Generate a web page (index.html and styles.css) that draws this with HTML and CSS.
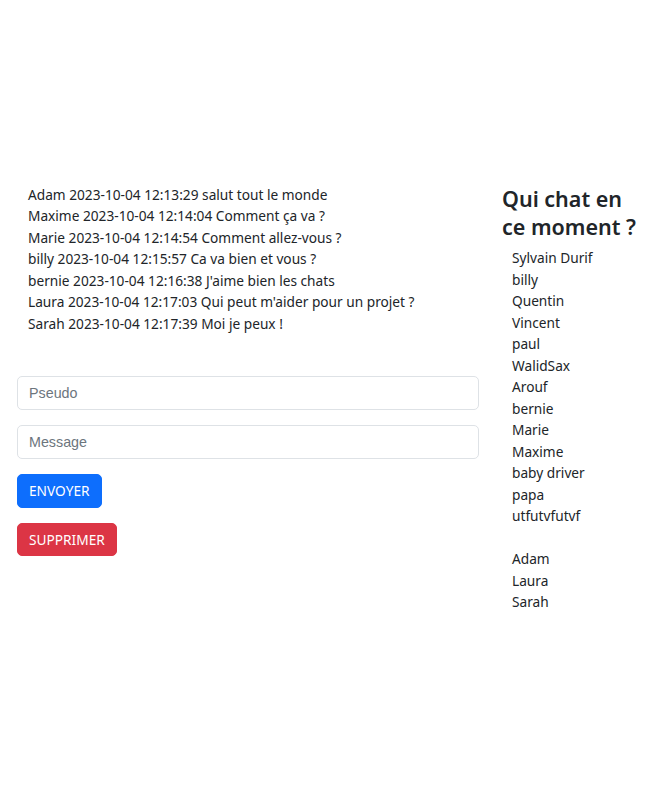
FILE: index.html
```html
<!DOCTYPE html>
<html lang="fr">
<head>
<meta charset="utf-8">
<title>Chat</title>
<link rel="stylesheet" href="styles.css">
</head>
<body>
<div class="page">
  <div class="main">
    <div class="chat">
      <div class="messages">
        <div class="msg">Adam 2023-10-04 12:13:29 salut tout le monde</div>
        <div class="msg">Maxime 2023-10-04 12:14:04 Comment ça va ?</div>
        <div class="msg">Marie 2023-10-04 12:14:54 Comment allez-vous ?</div>
        <div class="msg">billy 2023-10-04 12:15:57 Ca va bien et vous ?</div>
        <div class="msg">bernie 2023-10-04 12:16:38 J'aime bien les chats</div>
        <div class="msg">Laura 2023-10-04 12:17:03 Qui peut m'aider pour un projet ?</div>
        <div class="msg">Sarah 2023-10-04 12:17:39 Moi je peux !</div>
      </div>
      <form class="form">
        <input class="field" type="text" placeholder="Pseudo">
        <input class="field" type="text" placeholder="Message">
        <div><button type="button" class="btn btn-primary">ENVOYER</button></div>
        <div><button type="button" class="btn btn-danger">SUPPRIMER</button></div>
      </form>
    </div>
    <aside class="side">
      <h2 class="title">Qui chat en ce moment ?</h2>
      <ul class="users">
        <li>Sylvain Durif</li>
        <li>billy</li>
        <li>Quentin</li>
        <li>Vincent</li>
        <li>paul</li>
        <li>WalidSax</li>
        <li>Arouf</li>
        <li>bernie</li>
        <li>Marie</li>
        <li>Maxime</li>
        <li>baby driver</li>
        <li>papa</li>
        <li>utfutvfutvf</li>
        <li class="empty"></li>
        <li>Adam</li>
        <li>Laura</li>
        <li>Sarah</li>
      </ul>
    </aside>
  </div>
</div>
</body>
</html>
```
FILE: styles.css
```css
* { box-sizing: border-box; }
html, body { margin: 0; padding: 0; background: #fff; }
body {
  font-family: "Noto Sans", "Open Sans", sans-serif;
  font-size: 13.7px;
  line-height: 21.45px;
  color: #212529;
}
.page { padding: 184px 0 0 17px; }
.main { display: flex; gap: 23px; }
.chat { width: 462px; }
.messages { padding-left: 11px; }
.form {
  margin-top: 42px;
  display: flex;
  flex-direction: column;
  gap: 15px;
}
.field {
  display: block;
  width: 100%;
  height: 34px;
  padding: 0 11px;
  border: 1px solid #dee2e6;
  border-radius: 5px;
  font-family: "Liberation Sans", Arial, sans-serif;
  font-size: 14.3px;
  color: #212529;
  background: #fff;
  outline: none;
}
.field::placeholder { color: #6c757d; }
.btn {
  display: block;
  height: 33.5px;
  padding: 0 11px;
  border: 1px solid transparent;
  border-radius: 5px;
  font-family: "Noto Sans", "Open Sans", sans-serif;
  font-size: 13.7px;
  color: #fff;
  cursor: pointer;
}
.btn-primary { background: #0d6efd; border-color: #0d6efd; }
.btn-danger { background: #dc3545; border-color: #dc3545; }
.side { width: 148px; }
.title {
  margin: 1px 0 6px 0;
  font-size: 21.5px;
  line-height: 28px;
  font-weight: 600;
  color: #212529;
}
.users {
  list-style: none;
  margin: 0;
  padding: 0 0 0 10px;
}
.users li { height: 21.5px; }
```
